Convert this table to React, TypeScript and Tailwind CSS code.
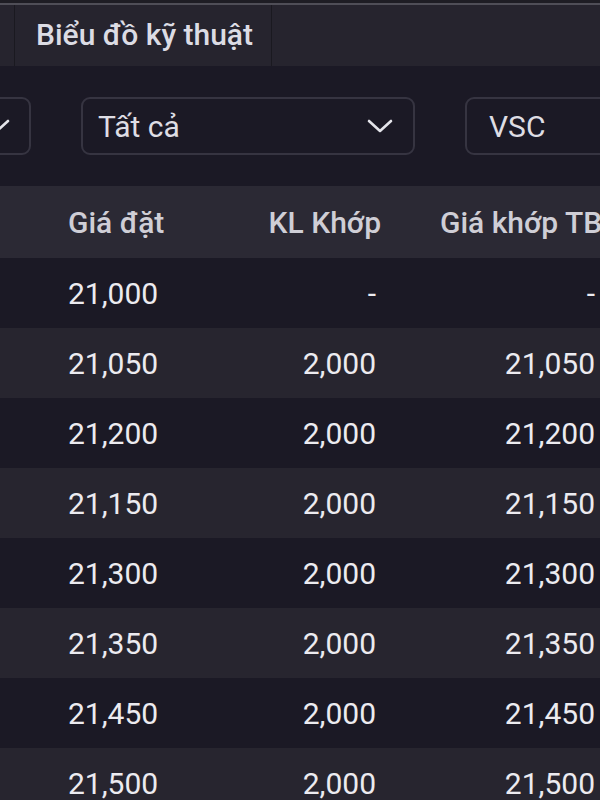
import React from "react";

const rows: [string, string, string][] = [
  ["21,000", "-", "-"],
  ["21,050", "2,000", "21,050"],
  ["21,200", "2,000", "21,200"],
  ["21,150", "2,000", "21,150"],
  ["21,300", "2,000", "21,300"],
  ["21,350", "2,000", "21,350"],
  ["21,450", "2,000", "21,450"],
  ["21,500", "2,000", "21,500"],
];

function Chevron({ className }: { className?: string }) {
  return (
    <svg className={className} width="28" height="16" viewBox="0 0 28 16" fill="none">
      <path d="M3 3 L14 13 L25 3" stroke="#e4e4ea" strokeWidth="2.6" strokeLinecap="round" strokeLinejoin="round" />
    </svg>
  );
}

export default function App() {
  return (
    <div
      className="w-[600px] h-[800px] overflow-hidden bg-[#1b1925] flex flex-col"
      style={{ fontFamily: "Roboto, 'Noto Sans', sans-serif" }}
    >
      <div className="h-[3px] bg-[#1e1d24] shrink-0" />
      <div className="h-[2px] bg-[#4f4e57] shrink-0" />
      <div className="h-[61px] bg-[#26242e] flex shrink-0">
        <div className="w-[15px] border-r border-[#1a1920]" />
        <div className="w-[257px] border-r border-[#1a1920] flex items-center pl-[21px] pb-[2px]">
          <span className="text-[30px] font-medium text-[#dcdce4] whitespace-nowrap">Biểu đồ kỹ thuật</span>
        </div>
      </div>
      <div className="h-[120px] flex items-center gap-[50px] shrink-0">
        <div className="w-[120px] shrink-0 -ml-[89px] h-[58px] rounded-[9px] border-2 border-[#363441] flex items-center justify-end pr-[18px]">
          <Chevron />
        </div>
        <div className="w-[334px] shrink-0 h-[58px] rounded-[9px] border-2 border-[#363441] flex items-center justify-between pl-[15px] pr-[19px]">
          <span className="text-[30px] text-[#dedde4]">Tất cả</span>
          <Chevron />
        </div>
        <div className="w-[200px] shrink-0 h-[58px] rounded-[9px] border-2 border-[#363441] flex items-center pl-[22px]">
          <span className="text-[30px] text-[#dedde4]">VSC</span>
        </div>
      </div>
      <div className="h-[72px] bg-[#2b2934] flex items-center pl-[68px] shrink-0 whitespace-nowrap">
        <div className="w-[150px] shrink-0 text-[30px] font-medium text-[#cfced6]">Giá đặt</div>
        <div className="w-[163px] shrink-0 text-right text-[30px] font-medium text-[#cfced6]">KL Khớp</div>
        <div className="pl-[59px] shrink-0 text-[30px] font-medium text-[#cfced6]">Giá khớp TB</div>
      </div>
      {rows.map((r, i) => (
        <div
          key={i}
          className={`h-[70px] flex items-center pl-[68px] shrink-0 ${i % 2 === 0 ? "bg-[#1b1925]" : "bg-[#27252f]"}`}
        >
          <div className="w-[150px] shrink-0 text-[30px] text-[#ecebf0]">{r[0]}</div>
          <div className="w-[158px] shrink-0 text-right text-[30px] text-[#ecebf0]">{r[1]}</div>
          <div className="w-[219px] shrink-0 text-right text-[30px] text-[#ecebf0]">{r[2]}</div>
        </div>
      ))}
    </div>
  );
}
